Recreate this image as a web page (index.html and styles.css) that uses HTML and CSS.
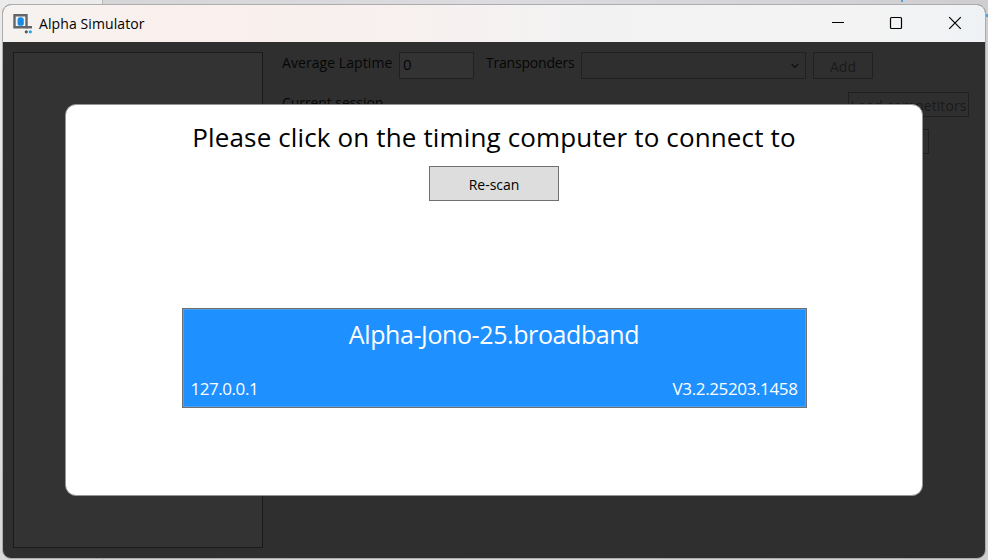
FILE: index.html
```
<!DOCTYPE html>
<html lang="en">
<head>
<meta charset="utf-8">
<title>Alpha Simulator</title>
<link rel="stylesheet" href="styles.css">
</head>
<body>
<div class="desktop-left"></div>
<div class="desktop-mark mark-top"></div>
<div class="desktop-mark mark-side"></div>
<main class="window">
  <header class="titlebar">
    <svg class="app-icon" width="20" height="20" viewBox="0 0 20 20">
      <path d="M1.5 1.2H13.5V13.2H1.5Z" fill="none" stroke="#62666b" stroke-width="2.4"/>
      <path d="M13.5 13.2H19" fill="none" stroke="#62666b" stroke-width="2.4"/>
      <rect x="4.6" y="3.2" width="6.2" height="8.6" rx="2.6" fill="#168be5"/>
      <circle cx="13.3" cy="17.8" r="1.6" fill="#575b60"/>
      <circle cx="17.3" cy="17.8" r="1.6" fill="#25a4ee"/>
    </svg>
    <span class="app-title">Alpha Simulator</span>
    <div class="controls">
      <svg width="58" height="37" viewBox="0 0 58 37"><path d="M23 17.5H35" stroke="#000"/></svg>
      <svg width="58" height="37" viewBox="0 0 58 37"><rect x="23.5" y="12.5" width="11" height="11" rx="1" fill="none" stroke="#000" stroke-width="1.2"/></svg>
      <svg width="58" height="37" viewBox="0 0 58 37"><path d="M24.2 12.2L35.8 23.8M35.8 12.2L24.2 23.8" stroke="#000" stroke-width="1.2"/></svg>
    </div>
  </header>
  <div class="client">
    <div class="list"></div>
    <div class="form">
      <div class="row fields">
        <span class="label laptime">Average Laptime</span>
        <div class="box input">0</div>
        <span class="label transponders">Transponders</span>
        <div class="box combo"><svg width="8" height="6" viewBox="0 0 8 6"><path d="M.7 1L4 4.3L7.3 1" fill="none" stroke="#101010" stroke-width="1.3"/></svg></div>
        <div class="box add">Add</div>
      </div>
      <div class="row session">
        <span class="label current">Current session</span>
        <div class="box load">Load competitors</div>
      </div>
      <div class="row extra"><div class="box small"></div></div>
    </div>
  </div>
</main>
<section class="dialog">
  <h1 class="heading">Please click on the timing computer to connect to</h1>
  <button class="rescan">Re-scan</button>
  <div class="computer">
    <div class="name">Alpha-Jono-25.broadband</div>
    <div class="details"><span class="ip">127.0.0.1</span><span class="version">V3.2.25203.1458</span></div>
  </div>
</section>
</body>
</html>
```
FILE: styles.css
```
* { box-sizing: border-box; }
body {
  margin: 0;
  width: 988px;
  height: 560px;
  padding: 4px 2px 1px;
  position: relative;
  overflow: hidden;
  background: linear-gradient(90deg, #d4d4d6 0, #dcdce0 50%, #cfcdd0 100%);
  font-family: "Open Sans", "Noto Sans", sans-serif;
  font-size: 14px;
  color: #000;
}
.desktop-left { position: absolute; left: 0; top: 0; width: 103px; height: 560px; background: linear-gradient(#ebebeb, #d8d8d8); border-right: 1px solid #b8b8b8; }
.desktop-mark { position: absolute; background: #4aa3dc; }
.mark-top { left: 901px; top: 0; width: 2px; height: 2px; }
.mark-side { left: 985px; top: 14px; width: 3px; height: 3px; }
.window {
  position: relative;
  width: 984px;
  height: 555px;
  border: 1px solid #adadad;
  border-radius: 9px;
  overflow: hidden;
  background: #2f2f2f;
}
.titlebar {
  height: 37px;
  display: flex;
  align-items: center;
  background: linear-gradient(90deg, #f5f2ef 0, #faf0ee 18%, #f8f0ee 36%, #f3f2f2 58%, #f3f3f3 88%, #eff2f5 100%);
}
.app-icon { margin-left: 10px; }
.app-title { margin-left: 6px; font-size: 14px; letter-spacing: 0.1px; }
.controls { display: flex; margin-left: auto; margin-right: 2px; }
.client { display: flex; height: 516px; padding: 10px; gap: 19px; }
.list { width: 250px; height: 496px; border: 1px solid #1a1a1a; background: #333; }
.form { flex: 1; color: #060606; }
.row { display: flex; }
.label { line-height: 20px; white-space: nowrap; }
.box { border: 1px solid #202020; flex: none; white-space: nowrap; }
.fields { height: 40px; }
.laptime { width: 117px; padding-top: 1px; letter-spacing: 0.07px; }
.input { width: 75px; height: 27px; background: #333; padding: 1px 3px; line-height: 20px; font-size: 15px; }
.transponders { margin-left: 12px; width: 95px; padding-top: 1px; letter-spacing: -0.2px; }
.combo { width: 225px; height: 27px; display: flex; align-items: center; justify-content: flex-end; padding-right: 6px; }
.add { width: 60px; height: 27px; margin-left: 7px; line-height: 27px; text-align: center; color: #1a1a1a; }
.session { height: 37px; margin-right: 6px; justify-content: space-between; }
.current { padding-top: 1px; letter-spacing: -0.07px; }
.load { width: 121px; height: 25px; text-align: center; line-height: 25px; letter-spacing: 0.1px; color: #1a1a1a; }
.extra { justify-content: flex-end; padding-right: 46px; }
.small { width: 81px; height: 25px; }
.dialog {
  position: absolute;
  left: 65px;
  top: 104px;
  width: 858px;
  height: 392px;
  border: 1px solid #969696;
  border-radius: 11px;
  background: #fff;
  display: flex;
  flex-direction: column;
  align-items: center;
}
.heading { margin: 13px 0 0; font-size: 26px; line-height: 38px; font-weight: 400; white-space: nowrap; letter-spacing: 0.14px; }
.rescan { margin-top: 10px; width: 130px; height: 35px; border: 1px solid #707070; background: #ddd; padding: 2px 0 0; font-family: inherit; font-size: 14px; color: #000; }
.computer {
  margin-top: 107px;
  width: 625px;
  height: 100px;
  border: 1px solid #707070;
  box-shadow: inset 0 0 0 1px #4ba0f0;
  background: #1e90ff;
  color: #fff;
  padding: 7px 8px 0;
}
.name { text-align: center; font-size: 25px; line-height: 36px; letter-spacing: -0.4px; }
.details { display: flex; justify-content: space-between; margin-top: 25px; font-size: 17px; line-height: 24px; }
.ip { letter-spacing: -0.45px; }
.version { letter-spacing: -0.37px; }
```
